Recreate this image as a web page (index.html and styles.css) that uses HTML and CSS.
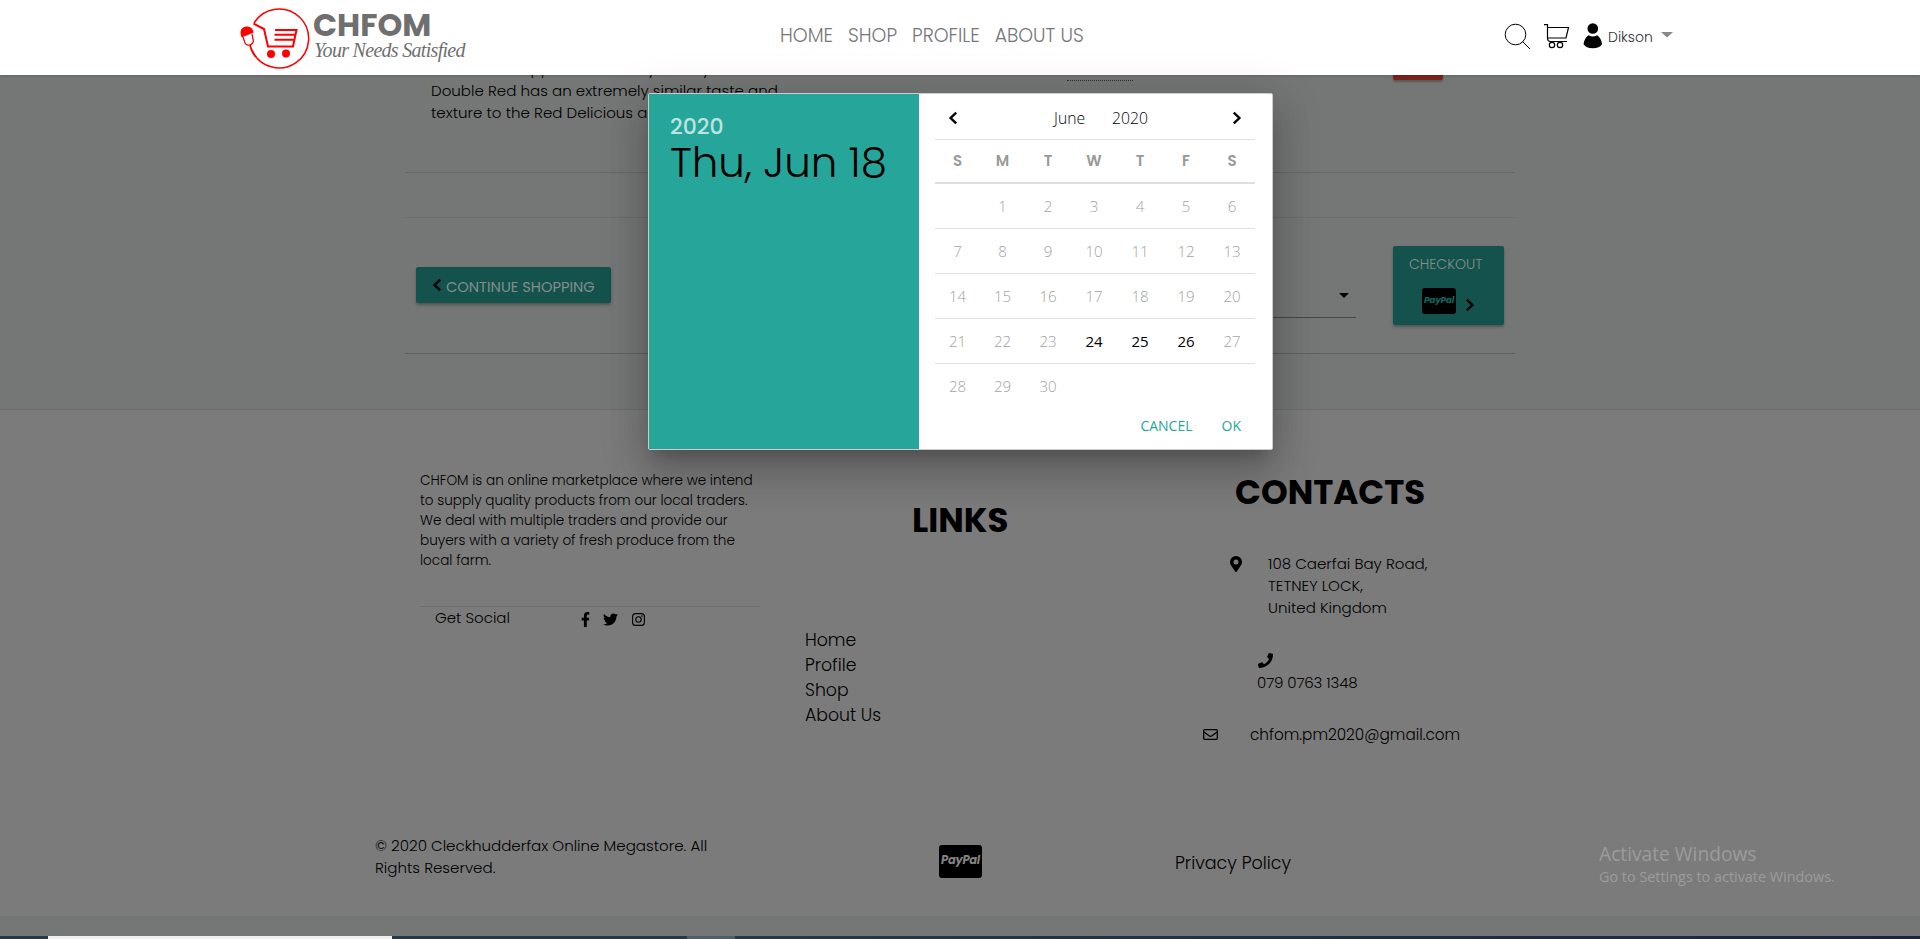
FILE: index.html
```html
<!DOCTYPE html>
<html lang="en">
<head>
<meta charset="utf-8">
<title>CHFOM - Cart</title>
<link rel="stylesheet" href="styles.css">
</head>
<body>
<svg class="defs" aria-hidden="true">
  <symbol id="left" viewBox="0 0 10 14"><path d="M8.2 1.6 2.6 7l5.6 5.4" fill="none" stroke="currentColor" stroke-width="2.4"/></symbol>
  <symbol id="right" viewBox="0 0 10 14"><path d="M1.8 1.6 7.4 7l-5.6 5.4" fill="none" stroke="currentColor" stroke-width="2.4"/></symbol>
</svg>

<header class="nav">
  <a class="logo">
    <svg class="logo-mark" viewBox="0 0 72 66" width="72" height="66">
      <g fill="none" stroke="#f00" stroke-width="1.5">
        <path d="M14 20A29.5 29.5 0 1 1 12 47"/>
        <path d="M13.5 20.5 24 26l4 17.500h25l3.500-16.500H35M34.500 31.800h20M34.500 36.800h19" stroke-width="2"/>
        <path d="M3 34l2 6q1.500 3 5 1.800 4-1.600 3.200-5L12 31" stroke-width="1.300"/>
        <path d="M10 42q2 8 6 12" stroke-width="1.800"/>
      </g>
      <path d="M.8 32q-1.500-7 5-8.400 6.200-1 8 6L1.600 34.500z" fill="#f00"/>
      <circle cx="31" cy="51" r="4" fill="#f00"/><circle cx="46" cy="50.500" r="4" fill="#f00"/>
    </svg>
    <span class="logo-text"><b class="brand">CHFOM</b><i class="tagline">Your Needs Satisfied</i></span>
  </a>
  <nav class="menu"><a>HOME</a><a>SHOP</a><a>PROFILE</a><a>ABOUT US</a></nav>
  <div class="tools">
    <svg width="27" height="27" viewBox="0 0 27 27" fill="none" stroke="#000" stroke-width="1"><circle cx="11.500" cy="11.500" r="10.300"/><path d="m18.500 18.500 7.500 7.500"/></svg>
    <svg class="tool-cart" width="26" height="26" viewBox="0 0 26 26" fill="none" stroke="#000" stroke-width="1.200"><path d="M0 1.700h3.500V15q0 3.500 3 3.500H23M3.500 4.500h21L22 15H4"/><circle cx="8" cy="22" r="2.700"/><circle cx="16" cy="22" r="2.700"/></svg>
    <svg class="tool-user" width="20" height="26" viewBox="0 0 20 26"><circle cx="9.800" cy="5.500" r="5.300"/><path d="M.5 21q1-6 5-8.700 4.300 2.500 8.600 0 4 2.700 5 8.700-2.500 4.300-9.300 4.300T.5 21z"/></svg>
    <span class="user">Dikson</span>
    <svg width="12" height="6" viewBox="0 0 12 6"><path d="M0 0h12L6 5.500z" fill="#888"/></svg>
  </div>
</header>

<main class="cart">
  <section class="product">
    <p class="desc"><span>Double Red apples are a tasty variety</span><br><span>Double Red has an extremely similar taste and</span><br><span>texture to the Red Delicious apple.</span></p>
    <div class="qty"></div>
    <div class="remove"></div>
  </section>
  <div class="spacer"></div>
  <section class="actions">
    <a class="btn back"><svg width="10" height="14"><use href="#left"/></svg><span>CONTINUE SHOPPING</span></a>
    <div class="select"><svg width="10" height="5" viewBox="0 0 10 5"><path d="M0 0h10L5 5z"/></svg></div>
    <a class="btn checkout"><span>CHECKOUT</span>
      <span class="pay-row"><span class="paypal small">PayPal</span><svg width="10" height="14"><use href="#right"/></svg></span></a>
  </section>
</main>

<footer class="footer">
  <div class="columns">
    <section class="about">
      <p>CHFOM is an online marketplace where we intend<br>to supply quality products from our local traders.<br>We deal with multiple traders and provide our<br>buyers with a variety of fresh produce from the<br>local farm.</p>
      <div class="social"><span>Get Social</span>
        <svg class="fb" width="9" height="15" viewBox="0 0 320 512" preserveAspectRatio="none"><path d="M279 288l14-93h-89v-60c0-25 12-50 52-50h41V7s-37-7-72-7c-73 0-121 44-121 125v70H23v93h81v224h100V288z"/></svg>
        <svg class="tw" width="15" height="15" viewBox="0 0 512 512"><path d="M459 152c0 4 0 9 0 14 0 138-105 298-298 298-59 0-114-17-161-47 8 1 16 1 25 1 49 0 94-16 130-45-46-1-85-31-98-73 7 1 13 2 20 2 9 0 19-2 28-4-48-10-84-52-84-103v-1c14 8 30 13 47 13C40 188 21 156 21 120c0-19 5-37 14-53 52 64 129 105 216 110-2-8-3-16-3-24 0-58 47-105 105-105 30 0 57 13 77 33 24-5 46-13 66-25-8 24-24 45-46 58 21-2 42-8 60-16-14 21-32 39-51 54z"/></svg>
        <svg class="ig" width="13" height="13" viewBox="0 0 13 13" fill="none" stroke="#000" stroke-width="1.100"><rect x=".6" y=".6" width="11.800" height="11.800" rx="3"/><circle cx="6.500" cy="6.500" r="2.700"/><circle cx="10" cy="3" r=".3"/></svg>
      </div>
    </section>
    <section class="links">
      <h2>LINKS</h2>
      <a>Home</a><a>Profile</a><a>Shop</a><a>About Us</a>
    </section>
    <section class="contacts">
      <h2>CONTACTS</h2>
      <div class="address"><svg width="12" height="16" viewBox="0 0 384 512"><path fill-rule="evenodd" d="M172 502C27 291 0 270 0 192a192 192 0 1 1 384 0c0 78-27 99-172 310-10 13-30 13-40 0zM192 272a80 80 0 1 0 0-160 80 80 0 0 0 0 160z"/></svg>
        <p>108 Caerfai Bay Road,<br>TETNEY LOCK,<br>United Kingdom</p></div>
      <div class="phone"><svg width="15" height="15" viewBox="0 0 512 512"><path d="M493 25 389 1c-11-3-23 3-27 14l-48 112c-4 10-1 22 7 28l61 50c-36 77-99 140-178 178l-50-61c-7-8-18-11-28-7L14 363c-10 5-16 17-13 28l24 104c2 10 12 17 23 17 256 0 464-207 464-464 0-11-8-21-19-23z"/></svg><span>079 0763 1348</span></div>
      <div class="email"><svg width="15" height="11" viewBox="0 0 15 11" fill="none" stroke="#000" stroke-width="1.300"><rect x=".65" y=".65" width="13.700" height="9.700" rx="1"/><path d="M1 3l5 3.800q1.500 1 3 0L14 3"/></svg><span>chfom.pm2020@gmail.com</span></div>
    </section>
  </div>
  <div class="bottom">
    <p>© 2020 Cleckhudderfax Online Megastore. All<br>Rights Reserved.</p>
    <span class="paypal">PayPal</span>
    <a>Privacy Policy</a>
  </div>
</footer>
<div class="taskbar"><i class="t-start"></i><i class="t-search"></i><i class="t-apps"></i><i class="t-active"></i></div>

<div class="watermark"><span class="w1">Activate Windows</span><span class="w2">Go to Settings to activate Windows.</span></div>

<div class="picker">
  <div class="picked"><span class="year">2020</span><span class="date">Thu, Jun 18</span></div>
  <div class="calendar">
    <div class="month"><svg width="10" height="14"><use href="#left"/></svg><span class="names"><span>June</span><span>2020</span></span><svg width="10" height="14"><use href="#right"/></svg></div>
    <table>
      <colgroup><col class="narrow"><col class="narrow"><col><col><col><col><col></colgroup>
      <thead><tr><th>S</th><th>M</th><th>T</th><th>W</th><th>T</th><th>F</th><th>S</th></tr></thead>
      <tbody>
      <tr><td></td><td>1</td><td>2</td><td>3</td><td>4</td><td>5</td><td>6</td></tr>
      <tr><td>7</td><td>8</td><td>9</td><td>10</td><td>11</td><td>12</td><td>13</td></tr>
      <tr><td>14</td><td>15</td><td>16</td><td>17</td><td>18</td><td>19</td><td>20</td></tr>
      <tr><td>21</td><td>22</td><td>23</td><td class="on">24</td><td class="on">25</td><td class="on">26</td><td>27</td></tr>
      <tr><td>28</td><td>29</td><td>30</td><td></td><td></td><td></td><td></td></tr>
      </tbody>
    </table>
    <div class="buttons"><a>CANCEL</a><a>OK</a></div>
  </div>
</div>
</body>
</html>
```
FILE: styles.css
```css
* { box-sizing: border-box; }
body { margin: 0; height: 939px; overflow: hidden; background: #757776; color: #000; font-family: Poppins, Inter, "Open Sans", sans-serif; font-weight: 300; font-size: 15.07px; line-height: 22px; }
p, h2 { margin: 0; }
svg { display: block; flex: none; }
.defs { position: absolute; width: 0; height: 0; }
span, a { white-space: nowrap; }

.nav { position: relative; z-index: 2; height: 75px; background: #fff; display: flex; box-shadow: 0 1px 3px rgba(0,0,0,.15); }
.logo { display: flex; width: 540px; padding-left: 240px; }
.logo-mark { margin-top: 3px; overflow: visible; }
.logo-text { display: flex; flex-direction: column; padding: 10px 0 0 1px; color: #6f6f6f; }
.brand { font-size: 31.6px; line-height: 30px; font-weight: 700; }
.tagline { font: italic 20px/20px "Liberation Serif", serif; letter-spacing: -.7px; margin-left: 1px; }
.menu { width: 964px; padding: 22px 0 0 240px; display: flex; gap: 15px; font-size: 18.850px; line-height: 27px; color: #777; }
.menu a { flex: none; }
.tools { display: flex; align-items: flex-start; padding-top: 23px; }
.tool-cart { margin-left: 13px; }
.tool-user { margin-left: 13px; }
.user { font-size: 14px; line-height: 20px; margin: 4px 8px 0 5px; color: #333; }
.tools svg:last-child { margin-top: 9px; }

.cart { width: 1110px; height: 334px; margin-left: 405px; }
.product { display: flex; height: 98px; border-bottom: 1px solid #676968; overflow: hidden; }
.desc { width: 360px; margin: -17px 0 0 26px; flex: none; }
.qty { width: 66px; height: 6px; margin-left: 276px; border-bottom: 1px dotted #333; }
.remove { width: 50px; height: 5px; margin-left: 260px; background: #79231c; border-radius: 0 0 2px 2px; box-shadow: 0 2px 2px rgba(0,0,0,.25); }
.spacer { height: 45px; border-bottom: 1px solid #6d6f6e; }
.actions { display: flex; align-items: flex-start; height: 136px; border-bottom: 1px solid #606261; }
.btn { background: #14534d; color: #838d8b; border-radius: 2px; box-shadow: 0 2px 3px rgba(0,0,0,.3); font-size: 14px; line-height: 20px; font-weight: 400; }
.btn svg { color: #000; }
.back { display: flex; width: 195px; height: 36px; margin: 49px 0 0 11px; padding: 10px 0 0 16px; gap: 4px; font-size: 14.650px; }
.back svg { margin-top: 1px; }
.select { display: flex; justify-content: flex-end; width: 410px; height: 82px; margin: 18px 0 0 335px; padding: 57px 7px 0 0; border-bottom: 1px solid #454746; }
.checkout { width: 111px; height: 79px; margin: 28px 0 0 37px; padding: 8px 0 0 16px; font-weight: 300; }
.pay-row { display: flex; margin: 14px 0 0 13px; gap: 9px; align-items: flex-start; }
.pay-row svg { margin-top: 10px; }
.paypal { display: block; width: 43px; height: 33px; background: #000; color: #838383; border-radius: 3px; text-align: center; font: italic 700 11.5px/31px Poppins, Inter, sans-serif; letter-spacing: -.3px; }
.paypal.small { width: 34px; height: 26px; font-size: 9px; line-height: 25px; color: #14665e; }

.footer { height: 507px; background: #7b7b7b; border-top: 1px solid #6d6f6f; }
.columns { display: grid; grid-template-columns: 385px 398px 300px; margin-left: 420px; height: 425px; }
.about { padding-top: 61px; font-size: 13.580px; line-height: 20px; }
.social { display: flex; width: 340px; margin-top: 35px; padding-left: 15px; border-top: 1px solid #6e6e6e; font-size: 15px; line-height: 22px; }
.social svg { margin-top: 5px; }
.social .fb { margin-left: 71px; }
.social .tw { margin-left: 13px; }
.social .ig { margin: 6px 0 0 14px; }
h2 { font-size: 34px; line-height: 40px; font-weight: 700; }
.links { padding-top: 90px; font-size: 17.300px; line-height: 25px; }
.links h2 { margin: 0 0 88px 107px; }
.links a { display: block; }
.contacts { padding-top: 62px; }
.contacts h2 { padding-left: 32px; }
.address { display: flex; margin: 41px 0 0 27px; }
.address svg { margin-top: 3px; }
.address p { margin-left: 26px; }
.phone { margin: 34px 0 0 55px; }
.phone span { display: block; margin: 4px 0 0 -1px; letter-spacing: -.15px; }
.email { display: flex; margin-top: 30px; font-size: 15.250px; }
.email svg { margin: 5px 32px 0 0; }
.bottom { display: grid; grid-template-columns: 564px 236px 130px; margin-left: 375px; }
.bottom .paypal { margin-top: 10px; }
.bottom a { margin-top: 16px; font-size: 17.500px; line-height: 25px; }

.taskbar { display: flex; height: 3px; margin-top: 20px; background: linear-gradient(90deg, #203a46 40%, #1a2545); }
.t-start { width: 48px; }
.t-search { width: 344px; background: #eee; }
.t-apps { width: 295px; }
.t-active { width: 48px; background: #4c5f6b; }

.watermark { position: absolute; left: 1599px; top: 841px; color: #9b9b9b; font-family: "Segoe UI", "Open Sans", sans-serif; font-weight: 400; display: flex; flex-direction: column; }
.w1 { font-size: 19.200px; line-height: 26px; }
.w2 { font-size: 14.400px; line-height: 20px; }

.picker { position: absolute; z-index: 3; left: 648px; top: 93px; width: 625px; height: 357px; border: 1px solid #ccc; border-radius: 2px; background: #fff; display: flex; box-shadow: 0 24px 38px 3px rgba(0,0,0,.14), 0 9px 46px 8px rgba(0,0,0,.12), 0 11px 15px -7px rgba(0,0,0,.2); }
.picked { width: 270px; background: #26a69a; padding: 19px 0 0 21px; display: flex; flex-direction: column; }
.year { font-size: 22px; line-height: 28px; font-weight: 500; color: rgba(255,255,255,.7); }
.date { font-size: 42px; line-height: 43px; letter-spacing: -.1px; }
.calendar { width: 352px; padding: 0 16px; font-family: "Segoe UI", "Open Sans", sans-serif; }
.month { display: flex; justify-content: space-between; height: 46px; padding: 17px 13px 0; border-bottom: 1px solid #dcdfe3; font-size: 15.700px; line-height: 22px; }
.month .names { display: flex; gap: 27px; margin: -4px 0 0 12px; }
table { width: 320px; border-collapse: collapse; table-layout: fixed; }
.narrow { width: 45px; }
th { height: 43px; padding: 0; border-bottom: 2px solid #dcdfe3; color: #999; font: 600 15px/22px Poppins, Inter, sans-serif; }
td { height: 45px; padding: 0; text-align: center; color: #a2a2a2; border-bottom: 1px solid #dcdfe3; font-weight: 300; }
tr:last-child td { border-bottom: 0; }
td.on { color: #000; font-weight: 400; }
.buttons { display: flex; justify-content: flex-end; gap: 29px; padding-right: 14px; color: #26a69a; font-size: 14px; line-height: 20px; font-weight: 400; margin-top: 8px; }
```
